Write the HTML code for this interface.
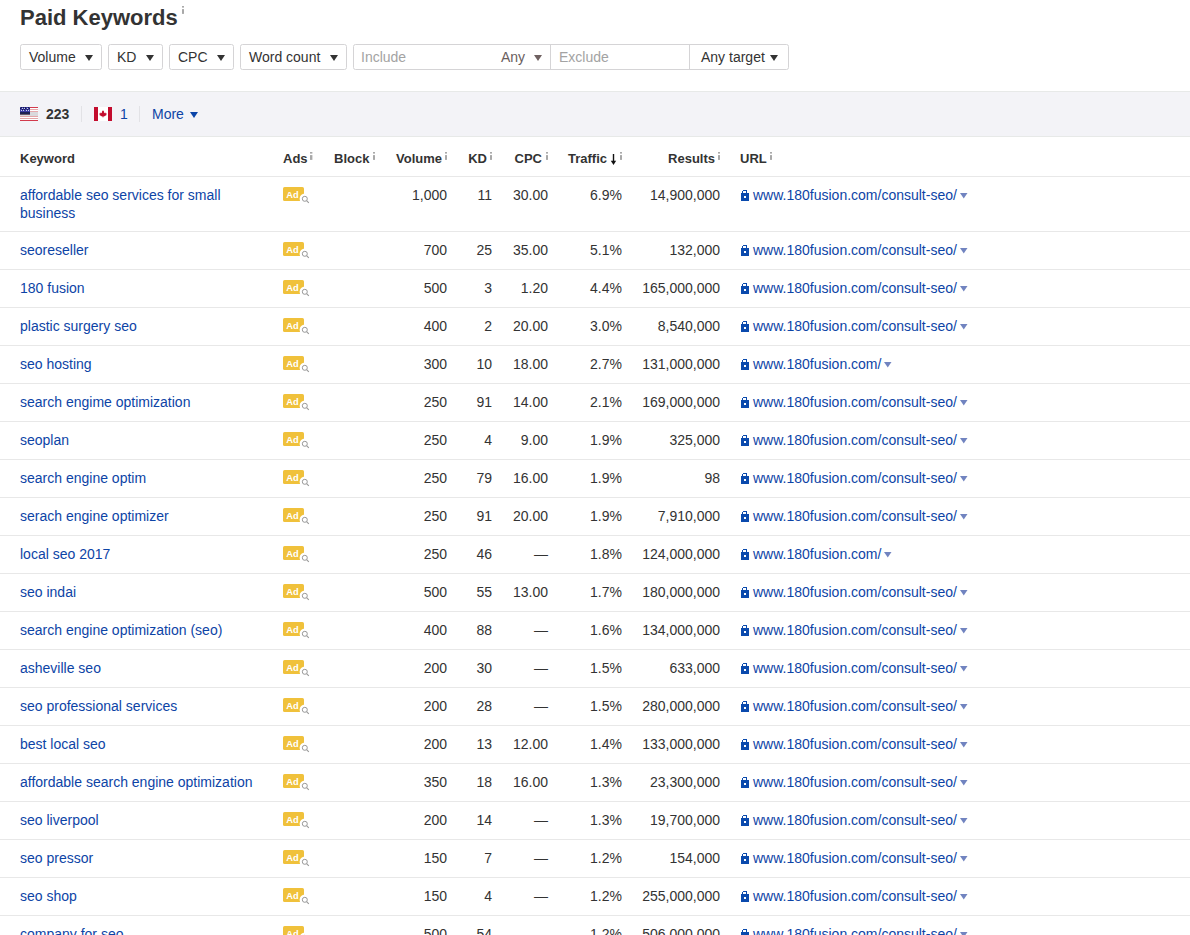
<!DOCTYPE html>
<html><head><meta charset="utf-8"><style>
*{box-sizing:border-box}
html,body{margin:0;padding:0;background:#fff;width:1190px;height:935px;overflow:hidden;position:relative}
body{font-family:"Liberation Sans",sans-serif;font-size:14px;color:#333}
.ab{position:absolute;display:block}
.t{position:absolute;white-space:nowrap;line-height:18px}
.r{text-align:right}
.inf{position:absolute;font-size:11px;font-weight:bold;color:#aaa;line-height:11px}
.btn{position:absolute;top:44px;height:26px;border:1px solid #d5d4d6;border-radius:2.5px;background:#fff}
.hline{position:absolute;left:0;width:1190px;height:1px;background:#e8e8e8}
.lk{color:#0d44a6}
.hd{font-weight:bold;font-size:13px;color:#333}
</style></head><body>

<div class="t" style="left:20px;top:5px;font-size:22px;line-height:26px;font-weight:bold;color:#333">Paid Keywords</div>
<svg class="ab" style="left:182px;top:6.1px" width="2.4" height="8" viewBox="0 0 2.4 8"><rect x="0" y="0" width="2.4" height="1.6" fill="#a9a9a9"/><rect x="0" y="3.1" width="2.4" height="4.8" fill="#a9a9a9"/></svg>
<div class="btn" style="left:20px;width:82px"></div>
<div class="t" style="left:29px;top:48px">Volume</div>
<svg class="ab" style="left:85px;top:55px" width="8" height="6"><path d="M0 0H8L4.0 6Z" fill="#333"/></svg>
<div class="btn" style="left:108px;width:55px"></div>
<div class="t" style="left:117px;top:48px">KD</div>
<svg class="ab" style="left:146px;top:55px" width="8" height="6"><path d="M0 0H8L4.0 6Z" fill="#333"/></svg>
<div class="btn" style="left:169px;width:65px"></div>
<div class="t" style="left:178px;top:48px">CPC</div>
<svg class="ab" style="left:217px;top:55px" width="8" height="6"><path d="M0 0H8L4.0 6Z" fill="#333"/></svg>
<div class="btn" style="left:240px;width:107px"></div>
<div class="t" style="left:249px;top:48px">Word count</div>
<svg class="ab" style="left:330px;top:55px" width="8" height="6"><path d="M0 0H8L4.0 6Z" fill="#333"/></svg>
<div class="btn" style="left:353px;width:436px"></div>
<div class="ab" style="left:550px;top:45px;width:1px;height:24px;background:#d5d4d6"></div>
<div class="ab" style="left:689px;top:45px;width:1px;height:24px;background:#d5d4d6"></div>
<div class="t" style="left:361px;top:48px;color:#a3a3a3">Include</div>
<div class="t" style="left:501px;top:48px;color:#6a5e5e">Any</div>
<svg class="ab" style="left:534px;top:55px" width="8" height="6"><path d="M0 0H8L4.0 6Z" fill="#6f6161"/></svg>
<div class="t" style="left:559px;top:48px;color:#a3a3a3">Exclude</div>
<div class="t" style="left:701px;top:48px;color:#333">Any target</div>
<svg class="ab" style="left:770px;top:55px" width="8" height="6"><path d="M0 0H8L4.0 6Z" fill="#333"/></svg>
<div class="ab" style="left:0;top:91px;width:1190px;height:46px;background:#f3f3f7;border-top:1px solid #e7e9e8;border-bottom:1px solid #e7e9e8"></div>
<svg class="ab" style="left:20px;top:107px" width="18" height="14" viewBox="0 0 18 14" shape-rendering="crispEdges">
<rect width="18" height="14" fill="#fff"/>
<rect y="0" width="18" height="1" fill="#d23a4c"/>
<rect y="2" width="18" height="1" fill="#e6a9ac"/>
<rect y="4" width="18" height="1" fill="#e6a9ac"/>
<rect y="5" width="18" height="4" fill="#d9d9dc"/>
<rect y="9" width="18" height="1" fill="#e3a6a8"/>
<rect y="11" width="18" height="1" fill="#e3a6a8"/>
<rect y="13" width="18" height="1" fill="#d23a4c"/>
<rect width="10" height="5" fill="#3a3aa0"/>
<rect y="5" width="10" height="2" fill="#1d2152"/>
<rect y="7" width="10" height="1" fill="#6a5a6a"/>
<g fill="#c9d0f0"><rect x="2" y="1" width="1" height="1"/><rect x="4" y="1" width="1" height="1"/><rect x="7" y="1" width="1" height="1"/><rect x="1" y="3" width="1" height="1"/><rect x="3" y="3" width="1" height="1"/><rect x="6" y="3" width="1" height="1"/><rect x="8" y="3" width="1" height="1"/></g>
<g fill="#1a1d50"><rect x="1" y="0" width="1" height="1"/><rect x="3" y="0" width="1" height="1"/><rect x="5" y="0" width="1" height="1"/><rect x="8" y="0" width="1" height="1"/><rect x="0" y="1" width="1" height="1"/><rect x="5" y="1" width="1" height="1"/><rect x="9" y="1" width="1" height="1"/><rect x="2" y="2" width="1" height="1"/><rect x="4" y="2" width="1" height="1"/><rect x="7" y="2" width="1" height="1"/></g>
</svg>
<div class="t" style="left:46px;top:105px;font-weight:bold;color:#333">223</div>
<div class="ab" style="left:81px;top:106px;width:1px;height:16px;background:#e2e2e6"></div>
<svg class="ab" style="left:94px;top:107px" width="18" height="14" viewBox="0 0 18 14">
<rect width="18" height="14" fill="#fff"/>
<rect width="4" height="14" fill="#c30c2e"/><rect x="14" width="4" height="14" fill="#c30c2e"/>
<path d="M9 3.3L10 4.6L10.3 6.2L11.4 5.6L11.8 6.4L12.7 6.3L12.3 7.5L12.6 7.9L10.4 9.3L9.9 9.5L9.3 9.4V10.6H8.7V9.4L8.1 9.5L7.6 9.3L5.4 7.9L5.7 7.5L5.3 6.3L6.2 6.4L6.6 5.6L7.7 6.2L8 4.6Z" fill="#c30c2e"/>
</svg>
<div class="t lk" style="left:120px;top:105px">1</div>
<div class="ab" style="left:139px;top:106px;width:1px;height:16px;background:#e2e2e6"></div>
<div class="t lk" style="left:152px;top:105px">More</div>
<svg class="ab" style="left:190px;top:112px" width="8" height="6"><path d="M0 0H8L4.0 6Z" fill="#0a44a8"/></svg>
<div class="t hd" style="left:20px;top:150px">Keyword</div>
<div class="t hd" style="left:283px;top:150px">Ads</div><svg class="ab" style="left:310.4px;top:152.1px" width="2.4" height="8" viewBox="0 0 2.4 8"><rect x="0" y="0" width="2.4" height="1.6" fill="#a9a9a9"/><rect x="0" y="3.1" width="2.4" height="4.8" fill="#a9a9a9"/></svg>
<div class="t hd" style="left:334px;top:150px">Block</div><svg class="ab" style="left:373px;top:152.1px" width="2.4" height="8" viewBox="0 0 2.4 8"><rect x="0" y="0" width="2.4" height="1.6" fill="#a9a9a9"/><rect x="0" y="3.1" width="2.4" height="4.8" fill="#a9a9a9"/></svg>
<div class="t hd r" style="right:748px;top:150px">Volume</div><svg class="ab" style="left:445px;top:152.1px" width="2.4" height="8" viewBox="0 0 2.4 8"><rect x="0" y="0" width="2.4" height="1.6" fill="#a9a9a9"/><rect x="0" y="3.1" width="2.4" height="4.8" fill="#a9a9a9"/></svg>
<div class="t hd r" style="right:703px;top:150px">KD</div><svg class="ab" style="left:489.7px;top:152.1px" width="2.4" height="8" viewBox="0 0 2.4 8"><rect x="0" y="0" width="2.4" height="1.6" fill="#a9a9a9"/><rect x="0" y="3.1" width="2.4" height="4.8" fill="#a9a9a9"/></svg>
<div class="t hd r" style="right:648px;top:150px">CPC</div><svg class="ab" style="left:545.8px;top:152.1px" width="2.4" height="8" viewBox="0 0 2.4 8"><rect x="0" y="0" width="2.4" height="1.6" fill="#a9a9a9"/><rect x="0" y="3.1" width="2.4" height="4.8" fill="#a9a9a9"/></svg>
<div class="t hd r" style="right:475px;top:150px">Results</div><svg class="ab" style="left:718px;top:152.1px" width="2.4" height="8" viewBox="0 0 2.4 8"><rect x="0" y="0" width="2.4" height="1.6" fill="#a9a9a9"/><rect x="0" y="3.1" width="2.4" height="4.8" fill="#a9a9a9"/></svg>
<div class="t hd r" style="right:583px;top:150px">Traffic</div>
<svg class="ab" style="left:610px;top:154px" width="7" height="11" viewBox="0 0 7 11"><rect x="2.8" y="0" width="1.4" height="7.5" fill="#111"/><path d="M0.8 6.8H6.2L3.5 11Z" fill="#111"/></svg>
<svg class="ab" style="left:619.8px;top:152.1px" width="2.4" height="8" viewBox="0 0 2.4 8"><rect x="0" y="0" width="2.4" height="1.6" fill="#a9a9a9"/><rect x="0" y="3.1" width="2.4" height="4.8" fill="#a9a9a9"/></svg>
<div class="ab" style="left:740px;top:150px;color:#333;font-weight:bold;font-size:13px;line-height:18px">URL</div>
<svg class="ab" style="left:769.8px;top:152.1px" width="2.4" height="8" viewBox="0 0 2.4 8"><rect x="0" y="0" width="2.4" height="1.6" fill="#a9a9a9"/><rect x="0" y="3.1" width="2.4" height="4.8" fill="#a9a9a9"/></svg>
<div class="hline" style="top:176px"></div>
<div class="t lk" style="left:20px;top:186px">affordable seo services for small<br>business</div>
<svg class="ab" style="left:283px;top:187px" width="28" height="18" viewBox="0 0 28 18"><rect x="0" y="0" width="21" height="14" rx="1.6" fill="#f0c13b"/><circle cx="21.8" cy="11.8" r="5.2" fill="#fff"/><text x="3.3" y="11" font-family="Liberation Sans" font-weight="bold" font-size="9.3" fill="#fff">Ad</text><circle cx="21.8" cy="11.8" r="2.5" fill="none" stroke="#999" stroke-width="1"/><path d="M23.6 13.6L25.8 15.8" stroke="#999" stroke-width="1.1"/></svg>
<div class="t r" style="right:743px;top:186px">1,000</div>
<div class="t r" style="right:698px;top:186px">11</div>
<div class="t r" style="right:642px;top:186px">30.00</div>
<div class="t r" style="right:568px;top:186px">6.9%</div>
<div class="t r" style="right:470px;top:186px">14,900,000</div>
<svg class="ab" style="left:741px;top:190px" width="8" height="11" viewBox="0 0 8 11" shape-rendering="crispEdges"><rect x="2" y="0" width="4" height="1" fill="#0a4aad"/><rect x="1" y="1" width="1" height="2" fill="#0a4aad"/><rect x="5" y="1" width="1" height="2" fill="#0a4aad"/><rect x="0" y="3" width="8" height="8" fill="#0a4aad"/><rect x="3" y="6" width="2" height="2" fill="#fff"/></svg>
<div class="t lk" style="left:753px;top:186px">www.180fusion.com/consult-seo/<svg style="margin-left:3px;vertical-align:1px" width="8" height="6"><path d="M0 0H7.5L3.75 5.5Z" fill="#7184c0"/></svg></div>
<div class="hline" style="top:231px"></div>
<div class="t lk" style="left:20px;top:241px">seoreseller</div>
<svg class="ab" style="left:283px;top:242px" width="28" height="18" viewBox="0 0 28 18"><rect x="0" y="0" width="21" height="14" rx="1.6" fill="#f0c13b"/><circle cx="21.8" cy="11.8" r="5.2" fill="#fff"/><text x="3.3" y="11" font-family="Liberation Sans" font-weight="bold" font-size="9.3" fill="#fff">Ad</text><circle cx="21.8" cy="11.8" r="2.5" fill="none" stroke="#999" stroke-width="1"/><path d="M23.6 13.6L25.8 15.8" stroke="#999" stroke-width="1.1"/></svg>
<div class="t r" style="right:743px;top:241px">700</div>
<div class="t r" style="right:698px;top:241px">25</div>
<div class="t r" style="right:642px;top:241px">35.00</div>
<div class="t r" style="right:568px;top:241px">5.1%</div>
<div class="t r" style="right:470px;top:241px">132,000</div>
<svg class="ab" style="left:741px;top:245px" width="8" height="11" viewBox="0 0 8 11" shape-rendering="crispEdges"><rect x="2" y="0" width="4" height="1" fill="#0a4aad"/><rect x="1" y="1" width="1" height="2" fill="#0a4aad"/><rect x="5" y="1" width="1" height="2" fill="#0a4aad"/><rect x="0" y="3" width="8" height="8" fill="#0a4aad"/><rect x="3" y="6" width="2" height="2" fill="#fff"/></svg>
<div class="t lk" style="left:753px;top:241px">www.180fusion.com/consult-seo/<svg style="margin-left:3px;vertical-align:1px" width="8" height="6"><path d="M0 0H7.5L3.75 5.5Z" fill="#7184c0"/></svg></div>
<div class="hline" style="top:269px"></div>
<div class="t lk" style="left:20px;top:279px">180 fusion</div>
<svg class="ab" style="left:283px;top:280px" width="28" height="18" viewBox="0 0 28 18"><rect x="0" y="0" width="21" height="14" rx="1.6" fill="#f0c13b"/><circle cx="21.8" cy="11.8" r="5.2" fill="#fff"/><text x="3.3" y="11" font-family="Liberation Sans" font-weight="bold" font-size="9.3" fill="#fff">Ad</text><circle cx="21.8" cy="11.8" r="2.5" fill="none" stroke="#999" stroke-width="1"/><path d="M23.6 13.6L25.8 15.8" stroke="#999" stroke-width="1.1"/></svg>
<div class="t r" style="right:743px;top:279px">500</div>
<div class="t r" style="right:698px;top:279px">3</div>
<div class="t r" style="right:642px;top:279px">1.20</div>
<div class="t r" style="right:568px;top:279px">4.4%</div>
<div class="t r" style="right:470px;top:279px">165,000,000</div>
<svg class="ab" style="left:741px;top:283px" width="8" height="11" viewBox="0 0 8 11" shape-rendering="crispEdges"><rect x="2" y="0" width="4" height="1" fill="#0a4aad"/><rect x="1" y="1" width="1" height="2" fill="#0a4aad"/><rect x="5" y="1" width="1" height="2" fill="#0a4aad"/><rect x="0" y="3" width="8" height="8" fill="#0a4aad"/><rect x="3" y="6" width="2" height="2" fill="#fff"/></svg>
<div class="t lk" style="left:753px;top:279px">www.180fusion.com/consult-seo/<svg style="margin-left:3px;vertical-align:1px" width="8" height="6"><path d="M0 0H7.5L3.75 5.5Z" fill="#7184c0"/></svg></div>
<div class="hline" style="top:307px"></div>
<div class="t lk" style="left:20px;top:317px">plastic surgery seo</div>
<svg class="ab" style="left:283px;top:318px" width="28" height="18" viewBox="0 0 28 18"><rect x="0" y="0" width="21" height="14" rx="1.6" fill="#f0c13b"/><circle cx="21.8" cy="11.8" r="5.2" fill="#fff"/><text x="3.3" y="11" font-family="Liberation Sans" font-weight="bold" font-size="9.3" fill="#fff">Ad</text><circle cx="21.8" cy="11.8" r="2.5" fill="none" stroke="#999" stroke-width="1"/><path d="M23.6 13.6L25.8 15.8" stroke="#999" stroke-width="1.1"/></svg>
<div class="t r" style="right:743px;top:317px">400</div>
<div class="t r" style="right:698px;top:317px">2</div>
<div class="t r" style="right:642px;top:317px">20.00</div>
<div class="t r" style="right:568px;top:317px">3.0%</div>
<div class="t r" style="right:470px;top:317px">8,540,000</div>
<svg class="ab" style="left:741px;top:321px" width="8" height="11" viewBox="0 0 8 11" shape-rendering="crispEdges"><rect x="2" y="0" width="4" height="1" fill="#0a4aad"/><rect x="1" y="1" width="1" height="2" fill="#0a4aad"/><rect x="5" y="1" width="1" height="2" fill="#0a4aad"/><rect x="0" y="3" width="8" height="8" fill="#0a4aad"/><rect x="3" y="6" width="2" height="2" fill="#fff"/></svg>
<div class="t lk" style="left:753px;top:317px">www.180fusion.com/consult-seo/<svg style="margin-left:3px;vertical-align:1px" width="8" height="6"><path d="M0 0H7.5L3.75 5.5Z" fill="#7184c0"/></svg></div>
<div class="hline" style="top:345px"></div>
<div class="t lk" style="left:20px;top:355px">seo hosting</div>
<svg class="ab" style="left:283px;top:356px" width="28" height="18" viewBox="0 0 28 18"><rect x="0" y="0" width="21" height="14" rx="1.6" fill="#f0c13b"/><circle cx="21.8" cy="11.8" r="5.2" fill="#fff"/><text x="3.3" y="11" font-family="Liberation Sans" font-weight="bold" font-size="9.3" fill="#fff">Ad</text><circle cx="21.8" cy="11.8" r="2.5" fill="none" stroke="#999" stroke-width="1"/><path d="M23.6 13.6L25.8 15.8" stroke="#999" stroke-width="1.1"/></svg>
<div class="t r" style="right:743px;top:355px">300</div>
<div class="t r" style="right:698px;top:355px">10</div>
<div class="t r" style="right:642px;top:355px">18.00</div>
<div class="t r" style="right:568px;top:355px">2.7%</div>
<div class="t r" style="right:470px;top:355px">131,000,000</div>
<svg class="ab" style="left:741px;top:359px" width="8" height="11" viewBox="0 0 8 11" shape-rendering="crispEdges"><rect x="2" y="0" width="4" height="1" fill="#0a4aad"/><rect x="1" y="1" width="1" height="2" fill="#0a4aad"/><rect x="5" y="1" width="1" height="2" fill="#0a4aad"/><rect x="0" y="3" width="8" height="8" fill="#0a4aad"/><rect x="3" y="6" width="2" height="2" fill="#fff"/></svg>
<div class="t lk" style="left:753px;top:355px">www.180fusion.com/<svg style="margin-left:3px;vertical-align:1px" width="8" height="6"><path d="M0 0H7.5L3.75 5.5Z" fill="#7184c0"/></svg></div>
<div class="hline" style="top:383px"></div>
<div class="t lk" style="left:20px;top:393px">search engime optimization</div>
<svg class="ab" style="left:283px;top:394px" width="28" height="18" viewBox="0 0 28 18"><rect x="0" y="0" width="21" height="14" rx="1.6" fill="#f0c13b"/><circle cx="21.8" cy="11.8" r="5.2" fill="#fff"/><text x="3.3" y="11" font-family="Liberation Sans" font-weight="bold" font-size="9.3" fill="#fff">Ad</text><circle cx="21.8" cy="11.8" r="2.5" fill="none" stroke="#999" stroke-width="1"/><path d="M23.6 13.6L25.8 15.8" stroke="#999" stroke-width="1.1"/></svg>
<div class="t r" style="right:743px;top:393px">250</div>
<div class="t r" style="right:698px;top:393px">91</div>
<div class="t r" style="right:642px;top:393px">14.00</div>
<div class="t r" style="right:568px;top:393px">2.1%</div>
<div class="t r" style="right:470px;top:393px">169,000,000</div>
<svg class="ab" style="left:741px;top:397px" width="8" height="11" viewBox="0 0 8 11" shape-rendering="crispEdges"><rect x="2" y="0" width="4" height="1" fill="#0a4aad"/><rect x="1" y="1" width="1" height="2" fill="#0a4aad"/><rect x="5" y="1" width="1" height="2" fill="#0a4aad"/><rect x="0" y="3" width="8" height="8" fill="#0a4aad"/><rect x="3" y="6" width="2" height="2" fill="#fff"/></svg>
<div class="t lk" style="left:753px;top:393px">www.180fusion.com/consult-seo/<svg style="margin-left:3px;vertical-align:1px" width="8" height="6"><path d="M0 0H7.5L3.75 5.5Z" fill="#7184c0"/></svg></div>
<div class="hline" style="top:421px"></div>
<div class="t lk" style="left:20px;top:431px">seoplan</div>
<svg class="ab" style="left:283px;top:432px" width="28" height="18" viewBox="0 0 28 18"><rect x="0" y="0" width="21" height="14" rx="1.6" fill="#f0c13b"/><circle cx="21.8" cy="11.8" r="5.2" fill="#fff"/><text x="3.3" y="11" font-family="Liberation Sans" font-weight="bold" font-size="9.3" fill="#fff">Ad</text><circle cx="21.8" cy="11.8" r="2.5" fill="none" stroke="#999" stroke-width="1"/><path d="M23.6 13.6L25.8 15.8" stroke="#999" stroke-width="1.1"/></svg>
<div class="t r" style="right:743px;top:431px">250</div>
<div class="t r" style="right:698px;top:431px">4</div>
<div class="t r" style="right:642px;top:431px">9.00</div>
<div class="t r" style="right:568px;top:431px">1.9%</div>
<div class="t r" style="right:470px;top:431px">325,000</div>
<svg class="ab" style="left:741px;top:435px" width="8" height="11" viewBox="0 0 8 11" shape-rendering="crispEdges"><rect x="2" y="0" width="4" height="1" fill="#0a4aad"/><rect x="1" y="1" width="1" height="2" fill="#0a4aad"/><rect x="5" y="1" width="1" height="2" fill="#0a4aad"/><rect x="0" y="3" width="8" height="8" fill="#0a4aad"/><rect x="3" y="6" width="2" height="2" fill="#fff"/></svg>
<div class="t lk" style="left:753px;top:431px">www.180fusion.com/consult-seo/<svg style="margin-left:3px;vertical-align:1px" width="8" height="6"><path d="M0 0H7.5L3.75 5.5Z" fill="#7184c0"/></svg></div>
<div class="hline" style="top:459px"></div>
<div class="t lk" style="left:20px;top:469px">search engine optim</div>
<svg class="ab" style="left:283px;top:470px" width="28" height="18" viewBox="0 0 28 18"><rect x="0" y="0" width="21" height="14" rx="1.6" fill="#f0c13b"/><circle cx="21.8" cy="11.8" r="5.2" fill="#fff"/><text x="3.3" y="11" font-family="Liberation Sans" font-weight="bold" font-size="9.3" fill="#fff">Ad</text><circle cx="21.8" cy="11.8" r="2.5" fill="none" stroke="#999" stroke-width="1"/><path d="M23.6 13.6L25.8 15.8" stroke="#999" stroke-width="1.1"/></svg>
<div class="t r" style="right:743px;top:469px">250</div>
<div class="t r" style="right:698px;top:469px">79</div>
<div class="t r" style="right:642px;top:469px">16.00</div>
<div class="t r" style="right:568px;top:469px">1.9%</div>
<div class="t r" style="right:470px;top:469px">98</div>
<svg class="ab" style="left:741px;top:473px" width="8" height="11" viewBox="0 0 8 11" shape-rendering="crispEdges"><rect x="2" y="0" width="4" height="1" fill="#0a4aad"/><rect x="1" y="1" width="1" height="2" fill="#0a4aad"/><rect x="5" y="1" width="1" height="2" fill="#0a4aad"/><rect x="0" y="3" width="8" height="8" fill="#0a4aad"/><rect x="3" y="6" width="2" height="2" fill="#fff"/></svg>
<div class="t lk" style="left:753px;top:469px">www.180fusion.com/consult-seo/<svg style="margin-left:3px;vertical-align:1px" width="8" height="6"><path d="M0 0H7.5L3.75 5.5Z" fill="#7184c0"/></svg></div>
<div class="hline" style="top:497px"></div>
<div class="t lk" style="left:20px;top:507px">serach engine optimizer</div>
<svg class="ab" style="left:283px;top:508px" width="28" height="18" viewBox="0 0 28 18"><rect x="0" y="0" width="21" height="14" rx="1.6" fill="#f0c13b"/><circle cx="21.8" cy="11.8" r="5.2" fill="#fff"/><text x="3.3" y="11" font-family="Liberation Sans" font-weight="bold" font-size="9.3" fill="#fff">Ad</text><circle cx="21.8" cy="11.8" r="2.5" fill="none" stroke="#999" stroke-width="1"/><path d="M23.6 13.6L25.8 15.8" stroke="#999" stroke-width="1.1"/></svg>
<div class="t r" style="right:743px;top:507px">250</div>
<div class="t r" style="right:698px;top:507px">91</div>
<div class="t r" style="right:642px;top:507px">20.00</div>
<div class="t r" style="right:568px;top:507px">1.9%</div>
<div class="t r" style="right:470px;top:507px">7,910,000</div>
<svg class="ab" style="left:741px;top:511px" width="8" height="11" viewBox="0 0 8 11" shape-rendering="crispEdges"><rect x="2" y="0" width="4" height="1" fill="#0a4aad"/><rect x="1" y="1" width="1" height="2" fill="#0a4aad"/><rect x="5" y="1" width="1" height="2" fill="#0a4aad"/><rect x="0" y="3" width="8" height="8" fill="#0a4aad"/><rect x="3" y="6" width="2" height="2" fill="#fff"/></svg>
<div class="t lk" style="left:753px;top:507px">www.180fusion.com/consult-seo/<svg style="margin-left:3px;vertical-align:1px" width="8" height="6"><path d="M0 0H7.5L3.75 5.5Z" fill="#7184c0"/></svg></div>
<div class="hline" style="top:535px"></div>
<div class="t lk" style="left:20px;top:545px">local seo 2017</div>
<svg class="ab" style="left:283px;top:546px" width="28" height="18" viewBox="0 0 28 18"><rect x="0" y="0" width="21" height="14" rx="1.6" fill="#f0c13b"/><circle cx="21.8" cy="11.8" r="5.2" fill="#fff"/><text x="3.3" y="11" font-family="Liberation Sans" font-weight="bold" font-size="9.3" fill="#fff">Ad</text><circle cx="21.8" cy="11.8" r="2.5" fill="none" stroke="#999" stroke-width="1"/><path d="M23.6 13.6L25.8 15.8" stroke="#999" stroke-width="1.1"/></svg>
<div class="t r" style="right:743px;top:545px">250</div>
<div class="t r" style="right:698px;top:545px">46</div>
<div class="t r" style="right:642px;top:545px">—</div>
<div class="t r" style="right:568px;top:545px">1.8%</div>
<div class="t r" style="right:470px;top:545px">124,000,000</div>
<svg class="ab" style="left:741px;top:549px" width="8" height="11" viewBox="0 0 8 11" shape-rendering="crispEdges"><rect x="2" y="0" width="4" height="1" fill="#0a4aad"/><rect x="1" y="1" width="1" height="2" fill="#0a4aad"/><rect x="5" y="1" width="1" height="2" fill="#0a4aad"/><rect x="0" y="3" width="8" height="8" fill="#0a4aad"/><rect x="3" y="6" width="2" height="2" fill="#fff"/></svg>
<div class="t lk" style="left:753px;top:545px">www.180fusion.com/<svg style="margin-left:3px;vertical-align:1px" width="8" height="6"><path d="M0 0H7.5L3.75 5.5Z" fill="#7184c0"/></svg></div>
<div class="hline" style="top:573px"></div>
<div class="t lk" style="left:20px;top:583px">seo indai</div>
<svg class="ab" style="left:283px;top:584px" width="28" height="18" viewBox="0 0 28 18"><rect x="0" y="0" width="21" height="14" rx="1.6" fill="#f0c13b"/><circle cx="21.8" cy="11.8" r="5.2" fill="#fff"/><text x="3.3" y="11" font-family="Liberation Sans" font-weight="bold" font-size="9.3" fill="#fff">Ad</text><circle cx="21.8" cy="11.8" r="2.5" fill="none" stroke="#999" stroke-width="1"/><path d="M23.6 13.6L25.8 15.8" stroke="#999" stroke-width="1.1"/></svg>
<div class="t r" style="right:743px;top:583px">500</div>
<div class="t r" style="right:698px;top:583px">55</div>
<div class="t r" style="right:642px;top:583px">13.00</div>
<div class="t r" style="right:568px;top:583px">1.7%</div>
<div class="t r" style="right:470px;top:583px">180,000,000</div>
<svg class="ab" style="left:741px;top:587px" width="8" height="11" viewBox="0 0 8 11" shape-rendering="crispEdges"><rect x="2" y="0" width="4" height="1" fill="#0a4aad"/><rect x="1" y="1" width="1" height="2" fill="#0a4aad"/><rect x="5" y="1" width="1" height="2" fill="#0a4aad"/><rect x="0" y="3" width="8" height="8" fill="#0a4aad"/><rect x="3" y="6" width="2" height="2" fill="#fff"/></svg>
<div class="t lk" style="left:753px;top:583px">www.180fusion.com/consult-seo/<svg style="margin-left:3px;vertical-align:1px" width="8" height="6"><path d="M0 0H7.5L3.75 5.5Z" fill="#7184c0"/></svg></div>
<div class="hline" style="top:611px"></div>
<div class="t lk" style="left:20px;top:621px">search engine optimization (seo)</div>
<svg class="ab" style="left:283px;top:622px" width="28" height="18" viewBox="0 0 28 18"><rect x="0" y="0" width="21" height="14" rx="1.6" fill="#f0c13b"/><circle cx="21.8" cy="11.8" r="5.2" fill="#fff"/><text x="3.3" y="11" font-family="Liberation Sans" font-weight="bold" font-size="9.3" fill="#fff">Ad</text><circle cx="21.8" cy="11.8" r="2.5" fill="none" stroke="#999" stroke-width="1"/><path d="M23.6 13.6L25.8 15.8" stroke="#999" stroke-width="1.1"/></svg>
<div class="t r" style="right:743px;top:621px">400</div>
<div class="t r" style="right:698px;top:621px">88</div>
<div class="t r" style="right:642px;top:621px">—</div>
<div class="t r" style="right:568px;top:621px">1.6%</div>
<div class="t r" style="right:470px;top:621px">134,000,000</div>
<svg class="ab" style="left:741px;top:625px" width="8" height="11" viewBox="0 0 8 11" shape-rendering="crispEdges"><rect x="2" y="0" width="4" height="1" fill="#0a4aad"/><rect x="1" y="1" width="1" height="2" fill="#0a4aad"/><rect x="5" y="1" width="1" height="2" fill="#0a4aad"/><rect x="0" y="3" width="8" height="8" fill="#0a4aad"/><rect x="3" y="6" width="2" height="2" fill="#fff"/></svg>
<div class="t lk" style="left:753px;top:621px">www.180fusion.com/consult-seo/<svg style="margin-left:3px;vertical-align:1px" width="8" height="6"><path d="M0 0H7.5L3.75 5.5Z" fill="#7184c0"/></svg></div>
<div class="hline" style="top:649px"></div>
<div class="t lk" style="left:20px;top:659px">asheville seo</div>
<svg class="ab" style="left:283px;top:660px" width="28" height="18" viewBox="0 0 28 18"><rect x="0" y="0" width="21" height="14" rx="1.6" fill="#f0c13b"/><circle cx="21.8" cy="11.8" r="5.2" fill="#fff"/><text x="3.3" y="11" font-family="Liberation Sans" font-weight="bold" font-size="9.3" fill="#fff">Ad</text><circle cx="21.8" cy="11.8" r="2.5" fill="none" stroke="#999" stroke-width="1"/><path d="M23.6 13.6L25.8 15.8" stroke="#999" stroke-width="1.1"/></svg>
<div class="t r" style="right:743px;top:659px">200</div>
<div class="t r" style="right:698px;top:659px">30</div>
<div class="t r" style="right:642px;top:659px">—</div>
<div class="t r" style="right:568px;top:659px">1.5%</div>
<div class="t r" style="right:470px;top:659px">633,000</div>
<svg class="ab" style="left:741px;top:663px" width="8" height="11" viewBox="0 0 8 11" shape-rendering="crispEdges"><rect x="2" y="0" width="4" height="1" fill="#0a4aad"/><rect x="1" y="1" width="1" height="2" fill="#0a4aad"/><rect x="5" y="1" width="1" height="2" fill="#0a4aad"/><rect x="0" y="3" width="8" height="8" fill="#0a4aad"/><rect x="3" y="6" width="2" height="2" fill="#fff"/></svg>
<div class="t lk" style="left:753px;top:659px">www.180fusion.com/consult-seo/<svg style="margin-left:3px;vertical-align:1px" width="8" height="6"><path d="M0 0H7.5L3.75 5.5Z" fill="#7184c0"/></svg></div>
<div class="hline" style="top:687px"></div>
<div class="t lk" style="left:20px;top:697px">seo professional services</div>
<svg class="ab" style="left:283px;top:698px" width="28" height="18" viewBox="0 0 28 18"><rect x="0" y="0" width="21" height="14" rx="1.6" fill="#f0c13b"/><circle cx="21.8" cy="11.8" r="5.2" fill="#fff"/><text x="3.3" y="11" font-family="Liberation Sans" font-weight="bold" font-size="9.3" fill="#fff">Ad</text><circle cx="21.8" cy="11.8" r="2.5" fill="none" stroke="#999" stroke-width="1"/><path d="M23.6 13.6L25.8 15.8" stroke="#999" stroke-width="1.1"/></svg>
<div class="t r" style="right:743px;top:697px">200</div>
<div class="t r" style="right:698px;top:697px">28</div>
<div class="t r" style="right:642px;top:697px">—</div>
<div class="t r" style="right:568px;top:697px">1.5%</div>
<div class="t r" style="right:470px;top:697px">280,000,000</div>
<svg class="ab" style="left:741px;top:701px" width="8" height="11" viewBox="0 0 8 11" shape-rendering="crispEdges"><rect x="2" y="0" width="4" height="1" fill="#0a4aad"/><rect x="1" y="1" width="1" height="2" fill="#0a4aad"/><rect x="5" y="1" width="1" height="2" fill="#0a4aad"/><rect x="0" y="3" width="8" height="8" fill="#0a4aad"/><rect x="3" y="6" width="2" height="2" fill="#fff"/></svg>
<div class="t lk" style="left:753px;top:697px">www.180fusion.com/consult-seo/<svg style="margin-left:3px;vertical-align:1px" width="8" height="6"><path d="M0 0H7.5L3.75 5.5Z" fill="#7184c0"/></svg></div>
<div class="hline" style="top:725px"></div>
<div class="t lk" style="left:20px;top:735px">best local seo</div>
<svg class="ab" style="left:283px;top:736px" width="28" height="18" viewBox="0 0 28 18"><rect x="0" y="0" width="21" height="14" rx="1.6" fill="#f0c13b"/><circle cx="21.8" cy="11.8" r="5.2" fill="#fff"/><text x="3.3" y="11" font-family="Liberation Sans" font-weight="bold" font-size="9.3" fill="#fff">Ad</text><circle cx="21.8" cy="11.8" r="2.5" fill="none" stroke="#999" stroke-width="1"/><path d="M23.6 13.6L25.8 15.8" stroke="#999" stroke-width="1.1"/></svg>
<div class="t r" style="right:743px;top:735px">200</div>
<div class="t r" style="right:698px;top:735px">13</div>
<div class="t r" style="right:642px;top:735px">12.00</div>
<div class="t r" style="right:568px;top:735px">1.4%</div>
<div class="t r" style="right:470px;top:735px">133,000,000</div>
<svg class="ab" style="left:741px;top:739px" width="8" height="11" viewBox="0 0 8 11" shape-rendering="crispEdges"><rect x="2" y="0" width="4" height="1" fill="#0a4aad"/><rect x="1" y="1" width="1" height="2" fill="#0a4aad"/><rect x="5" y="1" width="1" height="2" fill="#0a4aad"/><rect x="0" y="3" width="8" height="8" fill="#0a4aad"/><rect x="3" y="6" width="2" height="2" fill="#fff"/></svg>
<div class="t lk" style="left:753px;top:735px">www.180fusion.com/consult-seo/<svg style="margin-left:3px;vertical-align:1px" width="8" height="6"><path d="M0 0H7.5L3.75 5.5Z" fill="#7184c0"/></svg></div>
<div class="hline" style="top:763px"></div>
<div class="t lk" style="left:20px;top:773px">affordable search engine optimization</div>
<svg class="ab" style="left:283px;top:774px" width="28" height="18" viewBox="0 0 28 18"><rect x="0" y="0" width="21" height="14" rx="1.6" fill="#f0c13b"/><circle cx="21.8" cy="11.8" r="5.2" fill="#fff"/><text x="3.3" y="11" font-family="Liberation Sans" font-weight="bold" font-size="9.3" fill="#fff">Ad</text><circle cx="21.8" cy="11.8" r="2.5" fill="none" stroke="#999" stroke-width="1"/><path d="M23.6 13.6L25.8 15.8" stroke="#999" stroke-width="1.1"/></svg>
<div class="t r" style="right:743px;top:773px">350</div>
<div class="t r" style="right:698px;top:773px">18</div>
<div class="t r" style="right:642px;top:773px">16.00</div>
<div class="t r" style="right:568px;top:773px">1.3%</div>
<div class="t r" style="right:470px;top:773px">23,300,000</div>
<svg class="ab" style="left:741px;top:777px" width="8" height="11" viewBox="0 0 8 11" shape-rendering="crispEdges"><rect x="2" y="0" width="4" height="1" fill="#0a4aad"/><rect x="1" y="1" width="1" height="2" fill="#0a4aad"/><rect x="5" y="1" width="1" height="2" fill="#0a4aad"/><rect x="0" y="3" width="8" height="8" fill="#0a4aad"/><rect x="3" y="6" width="2" height="2" fill="#fff"/></svg>
<div class="t lk" style="left:753px;top:773px">www.180fusion.com/consult-seo/<svg style="margin-left:3px;vertical-align:1px" width="8" height="6"><path d="M0 0H7.5L3.75 5.5Z" fill="#7184c0"/></svg></div>
<div class="hline" style="top:801px"></div>
<div class="t lk" style="left:20px;top:811px">seo liverpool</div>
<svg class="ab" style="left:283px;top:812px" width="28" height="18" viewBox="0 0 28 18"><rect x="0" y="0" width="21" height="14" rx="1.6" fill="#f0c13b"/><circle cx="21.8" cy="11.8" r="5.2" fill="#fff"/><text x="3.3" y="11" font-family="Liberation Sans" font-weight="bold" font-size="9.3" fill="#fff">Ad</text><circle cx="21.8" cy="11.8" r="2.5" fill="none" stroke="#999" stroke-width="1"/><path d="M23.6 13.6L25.8 15.8" stroke="#999" stroke-width="1.1"/></svg>
<div class="t r" style="right:743px;top:811px">200</div>
<div class="t r" style="right:698px;top:811px">14</div>
<div class="t r" style="right:642px;top:811px">—</div>
<div class="t r" style="right:568px;top:811px">1.3%</div>
<div class="t r" style="right:470px;top:811px">19,700,000</div>
<svg class="ab" style="left:741px;top:815px" width="8" height="11" viewBox="0 0 8 11" shape-rendering="crispEdges"><rect x="2" y="0" width="4" height="1" fill="#0a4aad"/><rect x="1" y="1" width="1" height="2" fill="#0a4aad"/><rect x="5" y="1" width="1" height="2" fill="#0a4aad"/><rect x="0" y="3" width="8" height="8" fill="#0a4aad"/><rect x="3" y="6" width="2" height="2" fill="#fff"/></svg>
<div class="t lk" style="left:753px;top:811px">www.180fusion.com/consult-seo/<svg style="margin-left:3px;vertical-align:1px" width="8" height="6"><path d="M0 0H7.5L3.75 5.5Z" fill="#7184c0"/></svg></div>
<div class="hline" style="top:839px"></div>
<div class="t lk" style="left:20px;top:849px">seo pressor</div>
<svg class="ab" style="left:283px;top:850px" width="28" height="18" viewBox="0 0 28 18"><rect x="0" y="0" width="21" height="14" rx="1.6" fill="#f0c13b"/><circle cx="21.8" cy="11.8" r="5.2" fill="#fff"/><text x="3.3" y="11" font-family="Liberation Sans" font-weight="bold" font-size="9.3" fill="#fff">Ad</text><circle cx="21.8" cy="11.8" r="2.5" fill="none" stroke="#999" stroke-width="1"/><path d="M23.6 13.6L25.8 15.8" stroke="#999" stroke-width="1.1"/></svg>
<div class="t r" style="right:743px;top:849px">150</div>
<div class="t r" style="right:698px;top:849px">7</div>
<div class="t r" style="right:642px;top:849px">—</div>
<div class="t r" style="right:568px;top:849px">1.2%</div>
<div class="t r" style="right:470px;top:849px">154,000</div>
<svg class="ab" style="left:741px;top:853px" width="8" height="11" viewBox="0 0 8 11" shape-rendering="crispEdges"><rect x="2" y="0" width="4" height="1" fill="#0a4aad"/><rect x="1" y="1" width="1" height="2" fill="#0a4aad"/><rect x="5" y="1" width="1" height="2" fill="#0a4aad"/><rect x="0" y="3" width="8" height="8" fill="#0a4aad"/><rect x="3" y="6" width="2" height="2" fill="#fff"/></svg>
<div class="t lk" style="left:753px;top:849px">www.180fusion.com/consult-seo/<svg style="margin-left:3px;vertical-align:1px" width="8" height="6"><path d="M0 0H7.5L3.75 5.5Z" fill="#7184c0"/></svg></div>
<div class="hline" style="top:877px"></div>
<div class="t lk" style="left:20px;top:887px">seo shop</div>
<svg class="ab" style="left:283px;top:888px" width="28" height="18" viewBox="0 0 28 18"><rect x="0" y="0" width="21" height="14" rx="1.6" fill="#f0c13b"/><circle cx="21.8" cy="11.8" r="5.2" fill="#fff"/><text x="3.3" y="11" font-family="Liberation Sans" font-weight="bold" font-size="9.3" fill="#fff">Ad</text><circle cx="21.8" cy="11.8" r="2.5" fill="none" stroke="#999" stroke-width="1"/><path d="M23.6 13.6L25.8 15.8" stroke="#999" stroke-width="1.1"/></svg>
<div class="t r" style="right:743px;top:887px">150</div>
<div class="t r" style="right:698px;top:887px">4</div>
<div class="t r" style="right:642px;top:887px">—</div>
<div class="t r" style="right:568px;top:887px">1.2%</div>
<div class="t r" style="right:470px;top:887px">255,000,000</div>
<svg class="ab" style="left:741px;top:891px" width="8" height="11" viewBox="0 0 8 11" shape-rendering="crispEdges"><rect x="2" y="0" width="4" height="1" fill="#0a4aad"/><rect x="1" y="1" width="1" height="2" fill="#0a4aad"/><rect x="5" y="1" width="1" height="2" fill="#0a4aad"/><rect x="0" y="3" width="8" height="8" fill="#0a4aad"/><rect x="3" y="6" width="2" height="2" fill="#fff"/></svg>
<div class="t lk" style="left:753px;top:887px">www.180fusion.com/consult-seo/<svg style="margin-left:3px;vertical-align:1px" width="8" height="6"><path d="M0 0H7.5L3.75 5.5Z" fill="#7184c0"/></svg></div>
<div class="hline" style="top:915px"></div>
<div class="t lk" style="left:20px;top:925px">company for seo</div>
<svg class="ab" style="left:283px;top:926px" width="28" height="18" viewBox="0 0 28 18"><rect x="0" y="0" width="21" height="14" rx="1.6" fill="#f0c13b"/><circle cx="21.8" cy="11.8" r="5.2" fill="#fff"/><text x="3.3" y="11" font-family="Liberation Sans" font-weight="bold" font-size="9.3" fill="#fff">Ad</text><circle cx="21.8" cy="11.8" r="2.5" fill="none" stroke="#999" stroke-width="1"/><path d="M23.6 13.6L25.8 15.8" stroke="#999" stroke-width="1.1"/></svg>
<div class="t r" style="right:743px;top:925px">500</div>
<div class="t r" style="right:698px;top:925px">54</div>
<div class="t r" style="right:642px;top:925px">—</div>
<div class="t r" style="right:568px;top:925px">1.2%</div>
<div class="t r" style="right:470px;top:925px">506,000,000</div>
<svg class="ab" style="left:741px;top:929px" width="8" height="11" viewBox="0 0 8 11" shape-rendering="crispEdges"><rect x="2" y="0" width="4" height="1" fill="#0a4aad"/><rect x="1" y="1" width="1" height="2" fill="#0a4aad"/><rect x="5" y="1" width="1" height="2" fill="#0a4aad"/><rect x="0" y="3" width="8" height="8" fill="#0a4aad"/><rect x="3" y="6" width="2" height="2" fill="#fff"/></svg>
<div class="t lk" style="left:753px;top:925px">www.180fusion.com/consult-seo/<svg style="margin-left:3px;vertical-align:1px" width="8" height="6"><path d="M0 0H7.5L3.75 5.5Z" fill="#7184c0"/></svg></div>
<div class="hline" style="top:953px"></div>
</body></html>
